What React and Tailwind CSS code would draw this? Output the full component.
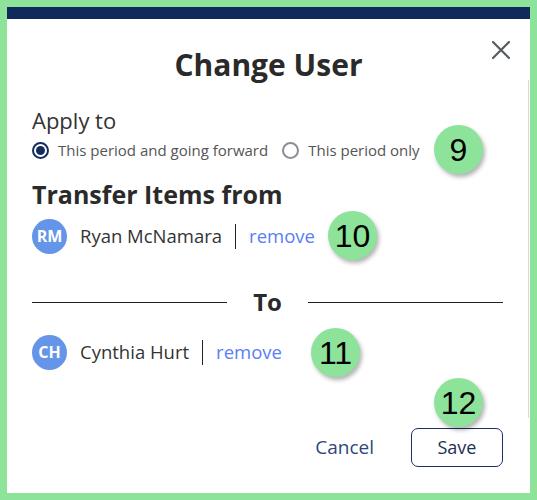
import React from "react";

function Badge({ n, className }) {
  return (
    <div
      className={`absolute w-[49px] h-[49px] rounded-full bg-[#8ee39a] flex items-center justify-center text-[32px] leading-none text-black shadow-[2px_3px_4px_rgba(0,0,0,0.3)] ${className}`}
      style={{ fontFamily: '"Liberation Sans", Arial, sans-serif' }}
    >
      {n}
    </div>
  );
}

function UserRow({ initials, name }) {
  return (
    <div className="flex items-center h-[36px]">
      <div className="w-[35px] h-[35px] rounded-full bg-[#6495e8] text-white font-bold text-[16px] flex items-center justify-center">
        {initials}
      </div>
      <span className="ml-[13px] text-[18.5px] text-[#333]">{name}</span>
      <span className="ml-[13px] w-px h-[25px] bg-[#222]" />
      <span className="ml-[13px] text-[18.5px] text-[#5a7ef5]">remove</span>
    </div>
  );
}

export default function App() {
  return (
    <div
      className="w-[537px] h-[500px] bg-[#8ee39a] pt-[7px] pl-[7px] pr-[7px] pb-[7px]"
      style={{ fontFamily: '"Open Sans", "Liberation Sans", sans-serif' }}
    >
      <div className="relative w-[523px] h-[486px] bg-white flex flex-col">
        <div className="h-[12px] bg-[#112a5c]" />
        <div className="absolute right-[1px] top-[73px] w-px h-[338px] bg-[#d8d8d8]" />
        <button className="absolute left-[484px] top-[33px] w-[20px] h-[20px] flex items-center justify-center">
          <svg width="18" height="18" viewBox="0 0 18 18">
            <path d="M1 1 L17 17 M17 1 L1 17" stroke="#555b60" strokeWidth="2.2" strokeLinecap="round" />
          </svg>
        </button>

        <h1 className="mt-[26px] text-center text-[30px] leading-[40px] font-bold text-[#2a2a2a]">
          Change User
        </h1>

        <div className="pl-[25px] pr-[27px] flex flex-col">
          <div className="mt-[20px] text-[22px] leading-[30px] text-[#333]">Apply to</div>
          <div className="mt-[5px] flex items-center h-[20px] text-[15px] text-[#555]">
            <span className="w-[17px] h-[17px] rounded-full border-2 border-[#132c5e] flex items-center justify-center">
              <span className="w-[9px] h-[9px] rounded-full bg-[#132c5e]" />
            </span>
            <span className="ml-[9px]">This period and going forward</span>
            <span className="ml-[14px] w-[17px] h-[17px] rounded-full border-2 border-[#8a8f96]" />
            <span className="ml-[9px]">This period only</span>
          </div>

          <div className="mt-[18px] text-[25px] leading-[32px] font-bold text-[#2a2a2a]">
            Transfer Items from
          </div>
          <div className="mt-[8px]">
            <UserRow initials="RM" name="Ryan McNamara" />
          </div>

          <div className="mt-[33px] flex items-center h-[30px]">
            <div className="flex-1 h-px bg-[#222]" />
            <span className="px-[26px] text-[24px] font-bold text-[#2a2a2a]">To</span>
            <div className="flex-1 h-px bg-[#222]" />
          </div>

          <div className="mt-[17px]">
            <UserRow initials="CH" name="Cynthia Hurt" />
          </div>

          <div className="mt-[58px] flex justify-end items-center">
            <button className="text-[19px] text-[#2e4778] mr-[37px]">Cancel</button>
            <button className="w-[92px] h-[39px] rounded-[7px] border border-[#1a3163] text-[18px] text-[#1e2f55]">
              Save
            </button>
          </div>
        </div>

        <Badge n="9" className="left-[427px] top-[118px]" />
        <Badge n="10" className="left-[321px] top-[204px]" />
        <Badge n="11" className="left-[304px] top-[321px]" />
        <Badge n="12" className="left-[427px] top-[371px]" />
      </div>
    </div>
  );
}
